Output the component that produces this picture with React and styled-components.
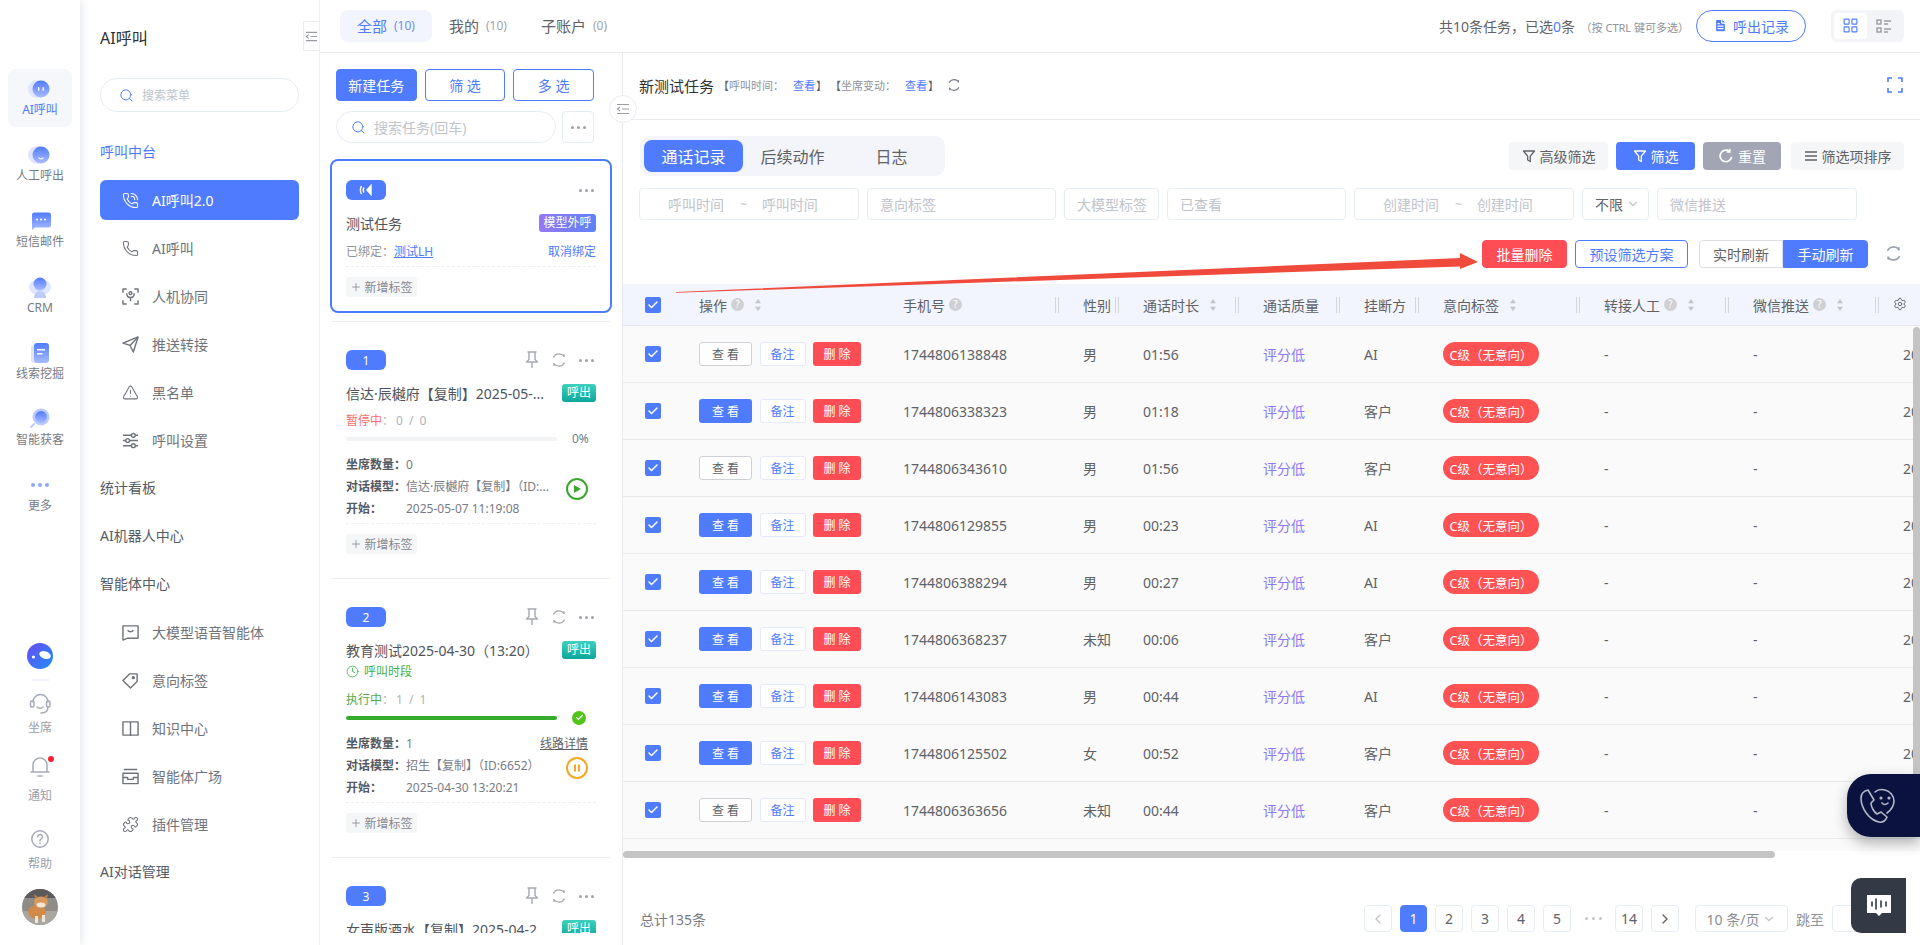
import React from "react";
import styled, { createGlobalStyle } from "styled-components";
import { Search, Phone, PhoneCall, TriangleAlert, Puzzle, Settings, ChevronDown, ChevronLeft, ChevronRight, Plus, Check, Clock, FileText, LayoutGrid } from "lucide-react";

const BLUE = "#4f7bff";
const FONT = `"Noto Sans", "Noto Sans CJK SC", sans-serif`;

const GlobalStyle = createGlobalStyle`
  html, body { margin: 0; padding: 0; height: 100%; background: #fff; overflow: hidden; }
  body { font-family: ${FONT}; color: #606266; font-size: 14px; }
  #root { height: 100%; }
  * { box-sizing: border-box; }
`;

const Page = styled.div`
  position: relative;
  display: flex;
  height: 945px;
  overflow: hidden;
`;

/* ---------- icon rail ---------- */

const Rail = styled.aside`
  width: 80px;
  flex: none;
  padding-top: 69px;
  display: flex;
  flex-direction: column;
  align-items: center;
  background: #fff;
  box-shadow: 2px 0 8px rgba(60, 70, 110, 0.12);
  z-index: 2;
`;

const RailItem = styled.div`
  width: 64px;
  height: 58px;
  margin-bottom: 8px;
  border-radius: 8px;
  padding-top: 7px;
  display: flex;
  flex-direction: column;
  align-items: center;
  background: ${(p) => (p.$active ? "#f5f7fb" : "transparent")};
  color: ${(p) => (p.$active ? BLUE : "#777b85")};
  font-size: 12px;
  line-height: 16px;
`;

const RailBottom = styled.div`
  margin-top: auto;
  width: 100%;
  display: flex;
  flex-direction: column;
  align-items: center;
  padding-bottom: 20px;
`;

const RailDivider = styled.div`
  width: 17px;
  height: 2px;
  background: #f0f2fa;
  margin: 10px 0 9px;
`;

const RailTool = styled.div`
  position: relative;
  display: flex;
  flex-direction: column;
  align-items: center;
  gap: ${(p) => p.$gap}px;
  margin-bottom: ${(p) => p.$after}px;
  color: #9a9ea8;
  font-size: 12px;
  line-height: 16px;
`;

const RedDot = styled.span`
  position: absolute;
  top: 2px;
  right: -2px;
  width: 6px;
  height: 6px;
  border-radius: 50%;
  background: #f5222d;
`;

function Grad({ id }) {
  return (
    <defs>
      <linearGradient id={id} x1="0" y1="1" x2="0" y2="0">
        <stop offset="0" stopColor="#a9bcff" />
        <stop offset="1" stopColor="#4f7bff" />
      </linearGradient>
    </defs>
  );
}

function RailGlyph({ kind }) {
  const id = "rail-" + kind;
  return (
    <svg width="28" height="26" viewBox="0 0 28 26">
      <Grad id={id} />
      {kind === "ai" && (
        <>
          <circle cx="11" cy="13" r="9" fill="#dfe6fb" />
          <circle cx="15" cy="13" r="8.5" fill={`url(#${id})`} />
          <rect x="12" y="11" width="1.4" height="4" rx=".7" fill="#fff" />
          <rect x="16.5" y="11" width="1.4" height="4" rx=".7" fill="#fff" />
        </>
      )}
      {kind === "call" && (
        <>
          <circle cx="11" cy="13" r="9" fill="#dfe6fb" />
          <circle cx="15" cy="13" r="8.5" fill={`url(#${id})`} />
          <path d="M12.5 15.5a3 3 0 0 0 5 0" stroke="#fff" strokeWidth="1.2" fill="none" />
        </>
      )}
      {kind === "sms" && (
        <>
          <path d="M6 7a2.500 2.500 0 0 1 2.500-2.500h14A2.500 2.500 0 0 1 25 7v10a2.500 2.500 0 0 1-2.500 2.500H9L6 22z" fill={`url(#${id})`} />
          <circle cx="11" cy="11.5" r="1" fill="#fff" />
          <circle cx="15" cy="11.5" r="1" fill="#fff" />
          <circle cx="19" cy="11.5" r="1" fill="#fff" />
        </>
      )}
      {kind === "crm" && (
        <>
          <ellipse cx="14" cy="13" rx="11" ry="8" fill="#dfe6fb" />
          <circle cx="14" cy="10" r="6.5" fill={`url(#${id})`} />
          <path d="M8 24c0-5 3-7 6-7s6 2 6 7z" fill="#bccbfb" />
        </>
      )}
      {kind === "lead" && (
        <>
          <rect x="5" y="5" width="14" height="18" rx="3" fill="#dfe6fb" />
          <rect x="8" y="3" width="15" height="20" rx="3" fill={`url(#${id})`} />
          <rect x="11" y="9" width="8" height="1.5" fill="#fff" />
          <rect x="11" y="13" width="5.5" height="1.5" fill="#fff" />
        </>
      )}
      {kind === "find" && (
        <>
          <circle cx="15" cy="11" r="8.5" fill="#bccbfb" />
          <circle cx="15" cy="11" r="6" fill={`url(#${id})`} />
          <path d="M8 18l-3 3" stroke="#bccbfb" strokeWidth="2" strokeLinecap="round" />
        </>
      )}
      {kind === "more" && (
        <>
          <circle cx="7" cy="13" r="2" fill="#8ea8fb" />
          <circle cx="14" cy="13" r="2" fill="#8ea8fb" />
          <circle cx="21" cy="13" r="2" fill="#8ea8fb" />
        </>
      )}
    </svg>
  );
}

function RailLogo() {
  return (
    <svg width="26" height="26" viewBox="0 0 26 26" style={{ display: "block" }}>
      <defs>
        <linearGradient id="rail-logo" x1="0" y1="0" x2="1" y2="1">
          <stop offset="0" stopColor="#6a4cf0" />
          <stop offset="1" stopColor="#1f8cff" />
        </linearGradient>
      </defs>
      <circle cx="13" cy="13" r="13" fill="url(#rail-logo)" />
      <ellipse cx="18" cy="12" rx="6" ry="3.600" fill="#fff" transform="rotate(20 18 12)" />
      <circle cx="6.500" cy="14" r="1.600" fill="#fff" />
    </svg>
  );
}

function Avatar() {
  return (
    <svg width="36" height="36" viewBox="0 0 36 36" style={{ display: "block" }}>
      <clipPath id="av"><circle cx="18" cy="18" r="18" /></clipPath>
      <g clipPath="url(#av)">
        <rect width="36" height="36" fill="#8f8c88" />
        <rect y="22" width="36" height="14" fill="#aaa6a0" />
        <rect y="0" width="36" height="9" fill="#5b5a5c" />
        <ellipse cx="15" cy="23" rx="9" ry="7" fill="#cf8a4c" />
        <ellipse cx="19" cy="13" rx="7" ry="5.500" fill="#d99a5e" />
        <ellipse cx="19" cy="16" rx="4.500" ry="2.500" fill="#f2e6d6" />
        <path d="M13 9l-1-4 4 3zM25 9l1-4-4 3z" fill="#c98444" />
        <rect x="13" y="27" width="3" height="7" fill="#f2e6d6" />
        <rect x="20" y="26" width="3" height="7" fill="#f2e6d6" />
      </g>
    </svg>
  );
}

/* ---------- second level menu ---------- */

const Menu = styled.nav`
  position: relative;
  width: 240px;
  flex: none;
  padding: 24px 20px 0;
  border-right: 1px solid #edeffa;
`;

const MenuTitle = styled.h1`
  margin: 0;
  height: 28px;
  font-size: 16px;
  font-weight: 400;
  line-height: 28px;
  color: #303133;
`;

const CollapseTab = styled.div`
  position: absolute;
  top: 21px;
  right: 0;
  width: 16px;
  height: 30px;
  border: 1px solid #e9ecf5;
  border-right: 0;
  background: #fff;
  display: flex;
  align-items: center;
  justify-content: center;
`;

const SearchBox = styled.div`
  height: ${(p) => p.$h || 34}px;
  border: 1px solid #e6ebf8;
  border-radius: 17px;
  display: flex;
  align-items: center;
  gap: 8px;
  padding-left: ${(p) => p.$pad || 18}px;
  color: #c0c4cc;
  font-size: ${(p) => p.$size || 12}px;
`;

const MenuSearch = styled(SearchBox)`
  margin: 26px 0 16px;
`;

const MenuHead = styled.div`
  height: 48px;
  line-height: 48px;
  font-size: 14px;
  color: ${(p) => (p.$on ? BLUE : "#565a63")};
`;

const MenuLink = styled.div`
  height: ${(p) => (p.$active ? 40 : 48)}px;
  display: flex;
  align-items: center;
  gap: 13px;
  padding-left: 22px;
  font-size: 14px;
  border-radius: 6px;
  background: ${(p) => (p.$active ? BLUE : "transparent")};
  color: ${(p) => (p.$active ? "#fff" : "#6f737c")};
  margin: ${(p) => (p.$active ? "4px 0" : "0")};
`;

/* ---------- content ---------- */

const Content = styled.div`
  flex: 1;
  min-width: 0;
  display: flex;
  flex-direction: column;
`;

const TopBar = styled.header`
  height: 53px;
  flex: none;
  border-bottom: 1px solid #e9ebf0;
  display: flex;
  align-items: center;
  padding: 0 16px 1px 20px;
`;

const ScopeTab = styled.div`
  height: 32px;
  padding: 0 17px;
  border-radius: 8px;
  display: flex;
  align-items: center;
  font-size: 15px;
  background: ${(p) => (p.$active ? "#f2f5fd" : "transparent")};
  color: ${(p) => (p.$active ? BLUE : "#606266")};
`;

const ScopeCount = styled.span`
  margin-left: 7px;
  font-size: 12px;
  color: ${(p) => (p.$active ? "#6d8dee" : "#a0a3aa")};
`;

const TopInfo = styled.div`
  margin-left: auto;
  font-size: 14px;
  color: #606266;
  white-space: nowrap;
  b { font-weight: 400; color: ${BLUE}; }
  small { font-size: 11px; color: #909399; margin-left: 2px; }
`;

const RecordButton = styled.button`
  margin-left: 7px;
  width: 110px;
  height: 32px;
  border: 1px solid ${BLUE};
  border-radius: 16px;
  background: #fff;
  color: ${BLUE};
  font: 14px ${FONT};
  display: flex;
  align-items: center;
  justify-content: center;
  gap: 5px;
  padding: 0;
`;

const ViewSwitch = styled.div`
  margin-left: 25px;
  width: 73px;
  height: 32px;
  padding: 3px;
  border-radius: 6px;
  background: #f3f4f7;
  display: flex;
`;

const ViewOption = styled.div`
  width: 33px;
  height: 26px;
  border-radius: 4px;
  display: flex;
  align-items: center;
  justify-content: center;
  background: ${(p) => (p.$active ? "#fff" : "transparent")};
`;

const Split = styled.div`
  flex: 1;
  min-height: 0;
  display: flex;
`;

/* ---------- task list ---------- */

const TaskPane = styled.section`
  position: relative;
  width: 302px;
  flex: none;
  height: 880px;
  display: flex;
  flex-direction: column;
`;

const TaskActions = styled.div`
  display: flex;
  gap: 8px;
  padding: 16px 28px 0 16px;
`;

const PaneButton = styled.button`
  flex: 1;
  height: 32px;
  border-radius: 4px;
  border: 1px solid ${BLUE};
  background: ${(p) => (p.$primary ? BLUE : "#fff")};
  color: ${(p) => (p.$primary ? "#fff" : BLUE)};
  font: 14px ${FONT};
  padding: 0;
`;

const TaskSearchRow = styled.div`
  display: flex;
  gap: 6px;
  padding: 10px 28px 16px 16px;
`;

const TaskSearch = styled(SearchBox)`
  flex: 1;
  border-radius: 16px;
`;

const DotsBox = styled.div`
  width: 32px;
  height: 32px;
  border: 1px solid #e6ebf8;
  border-radius: 4px;
  display: flex;
  align-items: center;
  justify-content: center;
`;

const Dots = styled.span`
  display: inline-flex;
  gap: ${(p) => p.$gap || 3}px;
  i {
    width: ${(p) => p.$dot || 3}px;
    height: ${(p) => p.$dot || 3}px;
    border-radius: 50%;
    background: ${(p) => p.$color || "#9ea1a9"};
  }
`;

const TaskScroll = styled.div`
  flex: 1;
  min-height: 0;
  overflow: hidden;
  padding: 0 10px;
`;

const TaskCard = styled.article`
  border: 2px solid ${(p) => (p.$active ? BLUE : "transparent")};
  border-radius: 8px;
  padding: 19px 14px 14px;
`;

const CardSep = styled.div`
  height: 1px;
  margin: 8px 2px 7px;
  background: #e9ebf0;
`;

const CardHead = styled.div`
  height: 20px;
  display: flex;
  align-items: center;
  gap: 12px;
  padding-right: 2px;
`;

const NumBadge = styled.span`
  width: 40px;
  height: 20px;
  border-radius: 6px;
  background: ${BLUE};
  color: #fff;
  font-size: 12px;
  display: flex;
  align-items: center;
  justify-content: center;
  margin-right: auto;
`;

const TitleRow = styled.div`
  margin-top: 14px;
  height: 18px;
  display: flex;
  align-items: center;
  justify-content: space-between;
  gap: 10px;
`;

const TaskName = styled.div`
  font-size: 14px;
  color: #50545c;
  white-space: nowrap;
`;

const TypeBadge = styled.span`
  flex: none;
  height: 18px;
  width: ${(p) => (p.$model ? 57 : 34)}px;
  text-align: center;
  border-radius: 3px;
  font-size: 12px;
  line-height: 18px;
  color: #fff;
  background: ${(p) => (p.$model ? "linear-gradient(90deg,#9579f4,#5d82f8)" : "linear-gradient(180deg,#3fd0bd,#0ca79c)")};
`;

const BoundRow = styled.div`
  margin-top: 10px;
  height: 18px;
  display: flex;
  align-items: center;
  font-size: 12px;
  color: #909399;
  a { color: ${BLUE}; text-decoration: underline; }
  span { margin-left: auto; color: ${BLUE}; }
`;

const DashLine = styled.div`
  margin-top: ${(p) => p.$top || 6}px;
  border-top: 1px dashed #eceef2;
`;

const TagButton = styled.div`
  margin-top: 10px;
  width: 71px;
  height: 20px;
  border-radius: 3px;
  background: #f5f6f8;
  color: #85888f;
  font-size: 12px;
  display: flex;
  align-items: center;
  justify-content: center;
  gap: 2px;
`;

const StateLine = styled.div`
  margin-top: ${(p) => p.$top || 10}px;
  height: 18px;
  font-size: 12px;
  line-height: 18px;
  color: #b0b3ba;
  em { font-style: normal; color: ${(p) => p.$color}; }
  span { letter-spacing: 1.500px; margin-left: 2px; }
`;

const TimeWindow = styled.div`
  margin-top: 3px;
  height: 18px;
  font-size: 12px;
  color: #3eb14c;
  display: flex;
  align-items: center;
  gap: 5px;
`;

const ProgressRow = styled.div`
  margin-top: 6px;
  height: 5px;
  display: flex;
  align-items: center;
`;

const Track = styled.div`
  width: 211px;
  height: 4px;
  border-radius: 2px;
  background: #f2f3f5;
  overflow: hidden;
`;

const Fill = styled.div`
  height: 100%;
  background: #34ad2c;
`;

const Percent = styled.span`
  margin-left: 15px;
  font-size: 12px;
  color: #777b85;
`;

const DoneDot = styled.span`
  margin-left: 15px;
  width: 14px;
  height: 14px;
  border-radius: 50%;
  background: #52c41a;
  display: flex;
  align-items: center;
  justify-content: center;
`;

const InfoGrid = styled.div`
  margin-top: 12px;
  display: grid;
  grid-template-columns: 205px 45px;
  grid-auto-rows: 22px;
`;

const InfoLine = styled.div`
  grid-column: 1;
  display: flex;
  align-items: center;
  font-size: 12px;
  color: #777b85;
  min-width: 0;
  white-space: nowrap;
  b { flex: none; width: 60px; font-weight: 700; color: #555962; }
`;

const LineLink = styled.a`
  grid-column: 2;
  grid-row: 1;
  justify-self: end;
  align-self: center;
  margin-right: 8px;
  white-space: nowrap;
  font-size: 12px;
  color: #606266;
  text-decoration: underline;
`;

const RunButton = styled.span`
  grid-column: 2;
  grid-row: 2 / span 2;
  justify-self: end;
  align-self: start;
  margin: 3px 8px 0 0;
  width: 22px;
  height: 22px;
  border-radius: 50%;
  border: 2px solid ${(p) => p.$color};
  display: flex;
  align-items: center;
  justify-content: center;
`;

const PaneHandle = styled.div`
  position: absolute;
  top: 42px;
  right: -15px;
  width: 28px;
  height: 28px;
  border: 1px solid #e9ebf0;
  border-radius: 50%;
  background: #fff;
  display: flex;
  align-items: center;
  justify-content: center;
  z-index: 3;
`;

/* ---------- detail ---------- */

const Detail = styled.main`
  flex: 1;
  min-width: 0;
  position: relative;
  border-left: 1px solid #e9ebf0;
  display: flex;
  flex-direction: column;
`;

const DetailHead = styled.div`
  height: 67px;
  flex: none;
  border-bottom: 1px solid #e9ebf0;
  display: flex;
  align-items: center;
  padding: 0 17px 2px;
  margin-left: -1px;
`;

const DetailName = styled.span`
  font-size: 15px;
  color: #303133;
`;

const DetailMeta = styled.span`
  margin-left: 4px;
  font-size: 11px;
  color: #909399;
  white-space: nowrap;
  a { color: ${BLUE}; margin: 0 1px 0 9px; }
  i { font-style: normal; color: #606266; }
`;

const ControlRow = styled.div`
  display: flex;
  align-items: center;
  justify-content: space-between;
  padding: 16px 16px 0 17px;
`;

const ViewTabs = styled.div`
  padding: 4px;
  border-radius: 10px;
  background: #f3f5fa;
  display: flex;
`;

const ViewTab = styled.div`
  width: 99px;
  height: 32px;
  border-radius: 8px;
  display: flex;
  align-items: center;
  justify-content: center;
  font-size: 16px;
  background: ${(p) => (p.$active ? BLUE : "transparent")};
  color: ${(p) => (p.$active ? "#fff" : "#606266")};
`;

const ToolButtons = styled.div`
  display: flex;
  gap: 8px;
`;

const ToolButton = styled.button`
  height: 28px;
  width: ${(p) => p.$w}px;
  border: 0;
  border-radius: 4px;
  margin-left: ${(p) => p.$push || 0}px;
  background: ${(p) => p.$bg || "#f5f6f8"};
  color: ${(p) => p.$color || "#606266"};
  font: 14px ${FONT};
  display: flex;
  align-items: center;
  justify-content: center;
  gap: 4px;
  padding: 0;
`;

const FilterRow = styled.div`
  display: flex;
  gap: 8px;
  padding: 12px 0 0 16px;
`;

const Field = styled.div`
  width: ${(p) => p.$w}px;
  height: 32px;
  flex: none;
  border: 1px solid #e6ebf8;
  border-radius: 4px;
  display: flex;
  align-items: center;
  padding-left: ${(p) => p.$pad || 12}px;
  font-size: 14px;
  color: ${(p) => p.$ink || "#c0c4cc"};
  white-space: nowrap;
`;

const RangeTilde = styled.span`
  margin: 0 15px 0 16px;
  font-size: 12px;
`;

const ActionRow = styled.div`
  display: flex;
  align-items: center;
  justify-content: flex-end;
  padding: 19px 18px 0 0;
  height: 48px;
`;

const ActionButton = styled.button`
  height: 28px;
  width: ${(p) => p.$w}px;
  margin-right: ${(p) => p.$after || 0}px;
  border: 1px solid ${(p) => p.$border};
  border-radius: ${(p) => p.$radius || "4px"};
  background: ${(p) => p.$bg || "#fff"};
  color: ${(p) => p.$color};
  font: 14px ${FONT};
  padding: 0;
`;

const Table = styled.div`
  margin-top: 16px;
  position: relative;
`;

const COLS = "76px 204px 180px 60px 120px 101px 79px 161px 149px 150px 1fr";

const HeaderRow = styled.div`
  height: 42px;
  display: grid;
  grid-template-columns: ${COLS};
  align-items: center;
  background: #f2f5fd;
  border-bottom: 1px solid #e5e7ec;
`;

const HeadCell = styled.div`
  display: flex;
  align-items: center;
  gap: 4px;
  height: 100%;
  padding-right: 24px;
  font-size: 14px;
  color: #606266;
  white-space: nowrap;
`;

const HelpMark = styled.span`
  width: 13px;
  height: 13px;
  border-radius: 50%;
  background: #cfd0d4;
  color: #fff;
  font-size: 10px;
  line-height: 13px;
  text-align: center;
`;

const ColBar = styled.span`
  margin-left: auto;
  width: 4px;
  height: 16px;
  border-left: 1px solid #d4d6da;
  border-right: 1px solid #d4d6da;
`;

const GearSlot = styled.div`
  position: absolute;
  top: 13px;
  right: 13px;
  width: 14px;
  height: 14px;
  display: flex;
  color: #606266;
`;

const Row = styled.div`
  height: 57px;
  display: grid;
  grid-template-columns: ${COLS};
  align-items: center;
  background: #fafafa;
  border-bottom: 1px solid #e8e9ec;
  font-size: 14px;
  color: #606266;
`;

const CheckCell = styled.div`
  padding-left: 22px;
`;

const CheckBox = styled.span`
  display: flex;
  width: 16px;
  height: 16px;
  border-radius: 2px;
  background: ${BLUE};
  align-items: center;
  justify-content: center;
`;

const OpCell = styled.div`
  display: flex;
  align-items: center;
  gap: 7.5px;
`;

const OpButton = styled.button`
  height: 24px;
  width: ${(p) => p.$w}px;
  padding: 0;
  border-radius: 3px;
  border: 1px solid ${(p) => p.$border || "transparent"};
  background: ${(p) => p.$bg || "#fff"};
  color: ${(p) => p.$color};
  font: 12px ${FONT};
  letter-spacing: ${(p) => p.$space || 0}px;
  text-indent: ${(p) => p.$space || 0}px;
`;

const Quality = styled.div`
  color: #8b78f6;
`;

const LevelPill = styled.span`
  display: inline-flex;
  width: 96px;
  height: 24px;
  border-radius: 12px;
  align-items: center;
  justify-content: center;
  background: #ff5252;
  color: #fff;
  font-size: 12.5px;
  white-space: nowrap;
`;

const RowFill = styled.div`
  height: 12px;
  background: #fafafa;
`;

const HScrollThumb = styled.div`
  width: 1152px;
  height: 7px;
  border-radius: 4px;
  background: #c4c4c4;
`;

const VScrollThumb = styled.div`
  position: absolute;
  top: 43px;
  right: 0;
  width: 7px;
  height: 470px;
  border-radius: 4px;
  background: #c4c4c4;
`;

const Footer = styled.footer`
  flex: none;
  display: flex;
  align-items: center;
  padding: 47px 40px 0 17px;
`;

const Total = styled.span`
  font-size: 14px;
  color: #777b85;
`;

const Pager = styled.div`
  margin-left: auto;
  display: flex;
  align-items: center;
  gap: 8px;
`;

const PageBox = styled.span`
  min-width: ${(p) => p.$w || 28}px;
  height: 27px;
  margin-left: ${(p) => p.$push || 0}px;
  border: 1px solid ${(p) => (p.$active ? BLUE : "#e6ebf8")};
  border-radius: 4px;
  background: ${(p) => (p.$active ? BLUE : "#fff")};
  color: ${(p) => (p.$active ? "#fff" : p.$ink || "#606266")};
  font-size: 14px;
  display: flex;
  align-items: center;
  justify-content: center;
  gap: 3px;
  white-space: nowrap;
`;

const PageDots = styled.span`
  width: 28px;
  display: flex;
  justify-content: center;
`;

const JumpLabel = styled.span`
  font-size: 14px;
  color: #909399;
`;

/* ---------- floating things ---------- */

const ArrowMark = styled.svg`
  position: absolute;
  left: 670px;
  top: 250px;
  z-index: 4;
  pointer-events: none;
`;

const CallWidget = styled.div`
  position: absolute;
  right: 0;
  top: 774px;
  width: 73px;
  height: 63px;
  border-radius: 24px 0 0 24px;
  background: #0b1240;
  box-shadow: 0 6px 14px rgba(0, 0, 0, 0.3);
  padding: 14px 0 0 12px;
  z-index: 5;
`;

const ChatWidget = styled.div`
  position: absolute;
  left: 1851px;
  top: 878px;
  width: 55px;
  height: 55px;
  border-radius: 10px 0 0 10px;
  background: #333a46;
  display: flex;
  align-items: center;
  justify-content: center;
  z-index: 5;
`;

const OutlineList = ({ size = 14 }) => (
  <svg width={size} height={size} viewBox="0 0 14 14" fill="none" stroke="#9a9ca3" strokeWidth="1.2">
    <path d="M1 2.500h12M6 7h7M1 11.500h12M4 5L1.500 7 4 9" />
  </svg>
);

const Cycle = ({ size = 16, color = "#a6a9b2", width = 1.3 }) => (
  <svg width={size} height={size} viewBox="0 0 16 16" fill="none" stroke={color} strokeWidth={width} strokeLinecap="round">
    <path d="M2.600 5A6.200 6.200 0 0 1 13 4.300" />
    <path d="M13.400 11A6.200 6.200 0 0 1 3 11.700" />
    <path d="M13 2.600v1.800M3 13.400v-1.800" />
  </svg>
);

const ResetMark = () => (
  <svg width="16" height="16" viewBox="0 0 16 16" fill="none" stroke="#fff" strokeWidth="1.700" strokeLinecap="round">
    <path d="M13.500 9.500A5.800 5.800 0 1 1 11 3" />
    <path d="M11.800 1.500V4H9.500" />
  </svg>
);

const Funnel = ({ color = "#606266" }) => (
  <svg width="14" height="14" viewBox="0 0 14 14" fill="none" stroke={color} strokeWidth="1.300" strokeLinejoin="round">
    <path d="M1.500 2h11L8.300 7.200V12.500L5.700 11V7.200z" />
  </svg>
);

const SortMark = () => (
  <svg width="8" height="14" viewBox="0 0 8 14" style={{ marginLeft: 6 }}>
    <path d="M4 1l3 4.200H1z" fill="#c4c6cc" />
    <path d="M4 13l3-4.200H1z" fill="#c4c6cc" />
  </svg>
);

const PinMark = () => (
  <svg width="14" height="18" viewBox="0 0 14 18" fill="none" stroke="#a6a9b2" strokeWidth="1.400" strokeLinejoin="round">
    <path d="M2.500 1h9M4 1v7.500L1.500 11h11L10 8.500V1M7 11v6" />
  </svg>
);

const Glyph = ({ size = 17, strokeWidth = 1.5, children }) => (
  <svg width={size} height={size} viewBox="0 0 18 18" fill="none" stroke="currentColor" strokeWidth={strokeWidth} strokeLinejoin="round">
    {children}
  </svg>
);

const ScanPerson = (p) => (
  <Glyph {...p}>
    <path d="M1 5V1h4M13 1h4v4M17 13v4h-4M5 17H1v-4" />
    <circle cx="9" cy="5.500" r="1.500" />
    <path d="M5 5.500c0 3 2 4.500 4 4.500s4-1.500 4-4.500M9 10v4" />
  </Glyph>
);
const PlaneMark = (p) => (
  <Glyph {...p}>
    <path d="M1 7.500L17 1l-5 16-3.500-7z" />
    <path d="M8.500 10L17 1" />
  </Glyph>
);
const SliderMark = (p) => (
  <Glyph {...p}>
    <path d="M1 3.500h9M14 3.500h3M1 9h3M8 9h9M1 14.500h9M14 14.500h3" />
    <circle cx="12" cy="3.500" r="2" />
    <circle cx="6" cy="9" r="2" />
    <circle cx="12" cy="14.500" r="2" />
  </Glyph>
);
const SmileBox = (p) => (
  <Glyph {...p}>
    <path d="M1 2h16v13H6l-5 2z" />
    <path d="M6 6.500a3.500 3.500 0 0 0 6 0" />
  </Glyph>
);
const TagMark = (p) => (
  <Glyph {...p}>
    <path d="M1 9l7-7h8v8l-7 7z" />
    <circle cx="12" cy="6" r="1" fill="currentColor" />
  </Glyph>
);
const BookMark = (p) => (
  <Glyph {...p}>
    <path d="M1 2h16v14H1zM9 2v15" />
  </Glyph>
);
const ShelfMark = (p) => (
  <Glyph {...p}>
    <path d="M2 1.500h14M1 5.500h16v11H1z" />
    <path d="M1 10h5v2h6v-2h5" />
  </Glyph>
);

const Help = () => <HelpMark>?</HelpMark>;

function MoreDots() {
  return <Dots $dot={3} $gap={3}><i /><i /><i /></Dots>;
}

function CardTools() {
  return (
    <>
      <PinMark />
      <Cycle />
      <MoreDots />
    </>
  );
}

function AddTag() {
  return (
    <TagButton>
      <Plus size={12} strokeWidth={1.600} />
      新增标签
    </TagButton>
  );
}

const menuTop = [
  [PhoneCall, "AI呼叫2.0", true],
  [Phone, "AI呼叫"],
  [ScanPerson, "人机协同"],
  [PlaneMark, "推送转接"],
  [TriangleAlert, "黑名单"],
  [SliderMark, "呼叫设置"],
];

const menuAgent = [
  [SmileBox, "大模型语音智能体"],
  [TagMark, "意向标签"],
  [BookMark, "知识中心"],
  [ShelfMark, "智能体广场"],
  [Puzzle, "插件管理"],
];

const railItems = [
  ["ai", "AI呼叫", true],
  ["call", "人工呼出"],
  ["sms", "短信邮件"],
  ["crm", "CRM"],
  ["lead", "线索挖掘"],
  ["find", "智能获客"],
  ["more", "更多"],
];

const rows = [
  [false, "1744806138848", "男", "01:56", "AI"],
  [true, "1744806338323", "男", "01:18", "客户"],
  [false, "1744806343610", "男", "01:56", "客户"],
  [true, "1744806129855", "男", "00:23", "AI"],
  [true, "1744806388294", "男", "00:27", "AI"],
  [true, "1744806368237", "未知", "00:06", "客户"],
  [true, "1744806143083", "男", "00:44", "AI"],
  [true, "1744806125502", "女", "00:52", "客户"],
  [false, "1744806363656", "未知", "00:44", "客户"],
];

export default function App() {
  return (
    <Page>
      <GlobalStyle />

      <Rail>
        {railItems.map(([kind, label, active]) => (
          <RailItem key={kind} $active={active}>
            <RailGlyph kind={kind} />
            {label}
          </RailItem>
        ))}
        <RailBottom>
          <RailLogo />
          <RailDivider />
          <RailTool $gap={4} $after={18}>
            <svg width="26" height="26" viewBox="0 0 26 26" fill="none" stroke="#a6abb8" strokeWidth="1.500" strokeLinecap="round">
              <path d="M6 12a7.500 7.500 0 0 1 15 0" />
              <rect x="3.500" y="11" width="3.500" height="6" rx="1.500" />
              <rect x="19.500" y="11" width="3.500" height="6" rx="1.500" />
              <path d="M21 17c0 4-3 6-7 6M10 17c1.500 1.500 4.500 1.500 6 0" />
            </svg>
            坐席
          </RailTool>
          <RailTool $gap={8} $after={25}>
            <svg width="24" height="26" viewBox="0 0 24 26" fill="none" stroke="#a6abb8" strokeWidth="1.500" strokeLinecap="round">
              <path d="M5 18V11a7 7 0 0 1 14 0v7zM3 18h18M10 22h4" />
            </svg>
            <RedDot />
            通知
          </RailTool>
          <RailTool $gap={7} $after={17}>
            <svg width="20" height="20" viewBox="0 0 20 20" fill="none" stroke="#a6abb8" strokeWidth="1.500">
              <circle cx="10" cy="10" r="8.200" />
              <path d="M7.600 7.800a2.400 2.400 0 1 1 3.600 2.100c-.8.500-1.200 1-1.200 1.800M10 14v.6" strokeLinecap="round" />
            </svg>
            帮助
          </RailTool>
          <Avatar />
        </RailBottom>
      </Rail>

      <Menu>
        <MenuTitle>AI呼叫</MenuTitle>
        <CollapseTab><OutlineList size={13} /></CollapseTab>
        <MenuSearch>
          <Search size={15} color={BLUE} strokeWidth={1.600} />
          搜索菜单
        </MenuSearch>
        <MenuHead $on>呼叫中台</MenuHead>
        {menuTop.map(([Icon, label, active]) => (
          <MenuLink key={label} $active={active}>
            <Icon size={17} strokeWidth={1.500} />
            {label}
          </MenuLink>
        ))}
        <MenuHead>统计看板</MenuHead>
        <MenuHead>AI机器人中心</MenuHead>
        <MenuHead>智能体中心</MenuHead>
        {menuAgent.map(([Icon, label]) => (
          <MenuLink key={label}>
            <Icon size={17} strokeWidth={1.500} />
            {label}
          </MenuLink>
        ))}
        <MenuHead>AI对话管理</MenuHead>
      </Menu>

      <Content>
        <TopBar>
          <ScopeTab $active>全部<ScopeCount $active>(10)</ScopeCount></ScopeTab>
          <ScopeTab>我的<ScopeCount>(10)</ScopeCount></ScopeTab>
          <ScopeTab>子账户<ScopeCount>(0)</ScopeCount></ScopeTab>
          <TopInfo>共10条任务，已选<b>0</b>条 <small>（按 CTRL 键可多选）</small></TopInfo>
          <RecordButton><FileText size={15} fill={BLUE} color="#fff" />呼出记录</RecordButton>
          <ViewSwitch>
            <ViewOption $active><LayoutGrid size={17} color={BLUE} strokeWidth={1.600} /></ViewOption>
            <ViewOption>
              <svg width="16" height="16" viewBox="0 0 16 16" fill="none" stroke="#9a9ca3" strokeWidth="1.400">
                <rect x="1" y="2" width="4" height="4" />
                <rect x="1" y="10" width="4" height="4" />
                <path d="M8 3h7M8 6h4M8 11h7M8 14h4" />
              </svg>
            </ViewOption>
          </ViewSwitch>
        </TopBar>

        <Split>
          <TaskPane>
            <PaneHandle><OutlineList /></PaneHandle>
            <TaskActions>
              <PaneButton $primary>新建任务</PaneButton>
              <PaneButton>筛 选</PaneButton>
              <PaneButton>多 选</PaneButton>
            </TaskActions>
            <TaskSearchRow>
              <TaskSearch $h={32} $pad={14} $size={14}>
                <Search size={15} color={BLUE} strokeWidth={1.600} />
                搜索任务(回车)
              </TaskSearch>
              <DotsBox><MoreDots /></DotsBox>
            </TaskSearchRow>
            <TaskScroll>
              <TaskCard $active>
                <CardHead>
                  <NumBadge>
                    <svg width="14" height="12" viewBox="0 0 14 12" fill="#fff" stroke="#fff" strokeWidth="1.400">
                      <path d="M2.500 2c-1.500 2-1.500 6 0 8M5 3.500c-1 1.500-1 3.500 0 5" fill="none" />
                      <path d="M12 1.500L8 6l4 4.500z" />
                    </svg>
                  </NumBadge>
                  <MoreDots />
                </CardHead>
                <TitleRow>
                  <TaskName>测试任务</TaskName>
                  <TypeBadge $model>模型外呼</TypeBadge>
                </TitleRow>
                <BoundRow>已绑定：<a>测试LH</a><span>取消绑定</span></BoundRow>
                <DashLine />
                <AddTag />
              </TaskCard>
              <CardSep />

              <TaskCard>
                <CardHead>
                  <NumBadge>1</NumBadge>
                  <CardTools />
                </CardHead>
                <TitleRow>
                  <TaskName>信达·辰樾府【复制】2025-05-...</TaskName>
                  <TypeBadge>呼出</TypeBadge>
                </TitleRow>
                <StateLine $color="#ff6b6b"><em>暂停中</em>：<span>0 / 0</span></StateLine>
                <ProgressRow>
                  <Track><Fill style={{ width: "0%" }} /></Track>
                  <Percent>0%</Percent>
                </ProgressRow>
                <InfoGrid>
                  <InfoLine><b>坐席数量：</b>0</InfoLine>
                  <InfoLine><b>对话模型：</b>信达·辰樾府【复制】（ID:...</InfoLine>
                  <InfoLine><b>开始：</b>2025-05-07 11:19:08</InfoLine>
                  <RunButton $color="#3aa82f">
                    <svg width="10" height="10" viewBox="0 0 10 10"><path d="M2 1l7 4-7 4z" fill="#3aa82f" /></svg>
                  </RunButton>
                </InfoGrid>
                <DashLine $top={4} />
                <AddTag />
              </TaskCard>
              <CardSep />

              <TaskCard>
                <CardHead>
                  <NumBadge>2</NumBadge>
                  <CardTools />
                </CardHead>
                <TitleRow>
                  <TaskName>教育测试2025-04-30（13:20）</TaskName>
                  <TypeBadge>呼出</TypeBadge>
                </TitleRow>
                <TimeWindow><Clock size={13} strokeWidth={1.600} />呼叫时段</TimeWindow>
                <StateLine $top={11} $color="#52a94a"><em>执行中</em>：<span>1 / 1</span></StateLine>
                <ProgressRow>
                  <Track><Fill style={{ width: "100%" }} /></Track>
                  <DoneDot><Check size={9} color="#fff" strokeWidth={3} /></DoneDot>
                </ProgressRow>
                <InfoGrid>
                  <InfoLine><b>坐席数量：</b>1</InfoLine>
                  <InfoLine><b>对话模型：</b>招生【复制】（ID:6652）</InfoLine>
                  <InfoLine><b>开始：</b>2025-04-30 13:20:21</InfoLine>
                  <LineLink>线路详情</LineLink>
                  <RunButton $color="#f5a623">
                    <svg width="10" height="10" viewBox="0 0 10 10" fill="#f5a623"><rect x="2" y="1.500" width="2" height="7" /><rect x="6" y="1.500" width="2" height="7" /></svg>
                  </RunButton>
                </InfoGrid>
                <DashLine $top={4} />
                <AddTag />
              </TaskCard>
              <CardSep />

              <TaskCard>
                <CardHead>
                  <NumBadge>3</NumBadge>
                  <CardTools />
                </CardHead>
                <TitleRow>
                  <TaskName>女声版酒水【复制】2025-04-2...</TaskName>
                  <TypeBadge>呼出</TypeBadge>
                </TitleRow>
              </TaskCard>
            </TaskScroll>
          </TaskPane>

          <Detail>
            <DetailHead>
              <DetailName>新测试任务</DetailName>
              <DetailMeta>
                <i>【</i>呼叫时间：<a>查看</a><i>】</i> <i>【</i>坐席变动：<a>查看</a><i>】</i>
              </DetailMeta>
              <span style={{ marginLeft: 8, display: "flex" }}><Cycle size={14} color="#777b85" /></span>
              <svg style={{ marginLeft: "auto" }} width="16" height="16" viewBox="0 0 16 16" fill="none" stroke={BLUE} strokeWidth="1.600">
                <path d="M1 5V1h4M11 1h4v4M15 11v4h-4M5 15H1v-4" />
              </svg>
            </DetailHead>

            <ControlRow>
              <ViewTabs>
                <ViewTab $active>通话记录</ViewTab>
                <ViewTab>后续动作</ViewTab>
                <ViewTab>日志</ViewTab>
              </ViewTabs>
              <ToolButtons>
                <ToolButton $w={99}><Funnel />高级筛选</ToolButton>
                <ToolButton $w={79} $bg={BLUE} $color="#fff"><Funnel color="#fff" />筛选</ToolButton>
                <ToolButton $w={78} $bg="#a2a6b4" $color="#fff"><ResetMark />重置</ToolButton>
                <ToolButton $w={113} $push={2}>
                  <svg width="14" height="14" viewBox="0 0 14 14" fill="none" stroke="#606266" strokeWidth="1.300">
                    <path d="M1 3h12M1 7h12M1 11h12" />
                  </svg>
                  筛选项排序
                </ToolButton>
              </ToolButtons>
            </ControlRow>

            <FilterRow>
              <Field $w={220} $pad={28}>呼叫时间<RangeTilde>~</RangeTilde>呼叫时间</Field>
              <Field $w={189}>意向标签</Field>
              <Field $w={95}>大模型标签</Field>
              <Field $w={179}>已查看</Field>
              <Field $w={220} $pad={28}>创建时间<RangeTilde>~</RangeTilde>创建时间</Field>
              <Field $w={67} $ink="#606266">不限<ChevronDown size={14} color="#c0c4cc" style={{ marginLeft: 3 }} /></Field>
              <Field $w={200}>微信推送</Field>
            </FilterRow>

            <ActionRow>
              <ActionButton $w={85} $after={8} $border="#ff4d56" $bg="#ff4d56" $color="#fff">批量删除</ActionButton>
              <ActionButton $w={113} $after={11} $border={BLUE} $color={BLUE}>预设筛选方案</ActionButton>
              <ActionButton $w={84} $border="#dcdfe6" $radius="4px 0 0 4px" $color="#606266">实时刷新</ActionButton>
              <ActionButton $w={85} $after={17} $border={BLUE} $bg={BLUE} $radius="0 4px 4px 0" $color="#fff">手动刷新</ActionButton>
              <Cycle size={17} color="#9aa0ac" width={1.500} />
            </ActionRow>

            <Table>
              <HeaderRow>
                <CheckCell><CheckBox><Check size={12} color="#fff" strokeWidth={3} /></CheckBox></CheckCell>
                <HeadCell>操作<Help /><SortMark /></HeadCell>
                <HeadCell>手机号<Help /><ColBar /></HeadCell>
                <HeadCell>性别<ColBar /></HeadCell>
                <HeadCell>通话时长<SortMark /><ColBar /></HeadCell>
                <HeadCell>通话质量<ColBar /></HeadCell>
                <HeadCell>挂断方<ColBar /></HeadCell>
                <HeadCell>意向标签<SortMark /><ColBar /></HeadCell>
                <HeadCell>转接人工<Help /><SortMark /><ColBar /></HeadCell>
                <HeadCell>微信推送<Help /><SortMark /><ColBar /></HeadCell>
              </HeaderRow>
              <GearSlot><Settings size={14} strokeWidth={1.600} /></GearSlot>
              {rows.map(([viewed, phone, sex, time, side]) => (
                <Row key={phone}>
                  <CheckCell><CheckBox><Check size={12} color="#fff" strokeWidth={3} /></CheckBox></CheckCell>
                  <OpCell>
                    {viewed
                      ? <OpButton $w={53} $bg={BLUE} $color="#fff" $space={3}>查看</OpButton>
                      : <OpButton $w={53} $border="#cfd1d6" $color="#606266" $space={3}>查看</OpButton>}
                    <OpButton $w={46} $border="#e3e8fa" $color={BLUE}>备注</OpButton>
                    <OpButton $w={48} $bg="#ff4d56" $color="#fff" $space={3}>删除</OpButton>
                  </OpCell>
                  <div>{phone}</div>
                  <div>{sex}</div>
                  <div>{time}</div>
                  <Quality>评分低</Quality>
                  <div>{side}</div>
                  <div><LevelPill>C级（无意向）</LevelPill></div>
                  <div>-</div>
                  <div>-</div>
                  <div>20</div>
                </Row>
              ))}
              <RowFill />
              <VScrollThumb />
            </Table>
            <HScrollThumb />

            <Footer>
              <Total>总计135条</Total>
              <Pager>
                <PageBox><ChevronLeft size={16} color="#c0c4cc" /></PageBox>
                <PageBox $w={27} $active>1</PageBox>
                <PageBox>2</PageBox>
                <PageBox>3</PageBox>
                <PageBox>4</PageBox>
                <PageBox>5</PageBox>
                <PageDots><Dots $dot={3} $gap={4} $color="#c0c4cc"><i /><i /><i /></Dots></PageDots>
                <PageBox>14</PageBox>
                <PageBox><ChevronRight size={16} /></PageBox>
                <PageBox $w={93} $push={8} $ink="#8a8d94">10 条/页<ChevronDown size={14} color="#c0c4cc" /></PageBox>
                <JumpLabel>跳至</JumpLabel>
                <PageBox $w={48} />
              </Pager>
            </Footer>
          </Detail>
        </Split>
      </Content>

      <ArrowMark width="820" height="50" viewBox="0 0 820 50">
        <polygon points="6,42 790,8 790,3 808,12 790,19 790,16.500 6,42.800" fill="#f04a3c" />
      </ArrowMark>

      <CallWidget>
        <svg width="36" height="36" viewBox="0 0 36 36" fill="none" stroke="#b4b8c6" strokeWidth="1.600" strokeLinecap="round" strokeLinejoin="round">
          <path d="M9 2C5 3 2 6 2 10c0 10 8 22 18 24 4 1 7-2 8-5l-6-5-4 2c-3-2-6-7-6-11l3-3z" />
          <path d="M16 4c2-2 6-3 10-2 5 1 9 6 9 11 0 5-3 9-7 12" />
          <circle cx="22" cy="10" r=".8" />
          <circle cx="30" cy="10" r=".8" />
          <path d="M23 15c1.500 2 4 2 6 0" />
        </svg>
      </CallWidget>

      <ChatWidget>
        <svg width="24" height="24" viewBox="0 0 24 24">
          <path d="M0 1h24v18h-9l-3 3-3-3H0z" fill="#fff" />
          <path d="M5 8v4M9 5v10M14 7v6M19 8v4" stroke="#333a46" strokeWidth="1.600" strokeLinecap="round" />
        </svg>
      </ChatWidget>
    </Page>
  );
}
